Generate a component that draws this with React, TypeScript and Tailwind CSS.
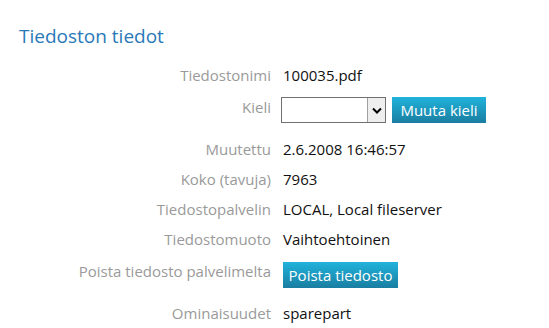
import React from "react";

const Label = ({ children }: { children: React.ReactNode }) => (
  <div className="w-[271px] shrink-0 text-right leading-5 text-[#9a9a9a]">{children}</div>
);

const Btn = ({ children, w }: { children: React.ReactNode; w: string }) => (
  <div
    className={`${w} h-[26px] flex items-center justify-center text-white leading-5 bg-gradient-to-b from-[#20b3dc] to-[#1a7ea1]`}
  >
    {children}
  </div>
);

export default function App() {
  return (
    <div
      className="w-[549px] h-[328px] bg-white overflow-hidden text-[15px] text-[#111]"
      style={{ fontFamily: '"Open Sans", "Noto Sans", sans-serif' }}
    >
      <div className="pl-[19px] pt-[22px] h-[65px] text-[19px] leading-7 text-[#2a79b8]">Tiedoston tiedot</div>
      <div className="flex flex-col">
        <div className="flex items-start gap-3 h-[32px]">
          <Label>Tiedostonimi</Label>
          <div className="leading-5">100035.pdf</div>
        </div>
        <div className="flex items-start gap-[10px] h-[42px]">
          <Label>Kieli</Label>
          <div className="flex items-start gap-[6px]">
            <div className="w-[105px] h-[26px] border border-[#707070] bg-white flex justify-end">
              <div className="w-[18px] h-full bg-[#eeeeee] border-l border-[#a0a0a0] flex items-center justify-center">
                <svg width="10" height="7" viewBox="0 0 10 7">
                  <path d="M1 1.5 L5 5.5 L9 1.5" fill="none" stroke="#000" strokeWidth="2" />
                </svg>
              </div>
            </div>
            <Btn w="w-[94px]">Muuta kieli</Btn>
          </div>
        </div>
        <div className="flex items-start gap-3 h-[30px]">
          <Label>Muutettu</Label>
          <div className="leading-5">2.6.2008 16:46:57</div>
        </div>
        <div className="flex items-start gap-3 h-[30px]">
          <Label>Koko (tavuja)</Label>
          <div className="leading-5">7963</div>
        </div>
        <div className="flex items-start gap-3 h-[30px]">
          <Label>Tiedostopalvelin</Label>
          <div className="leading-5">LOCAL, Local fileserver</div>
        </div>
        <div className="flex items-start gap-3 h-[32px]">
          <Label>Tiedostomuoto</Label>
          <div className="leading-5">Vaihtoehtoinen</div>
        </div>
        <div className="flex items-start gap-3 h-[42px]">
          <Label>Poista tiedosto palvelimelta</Label>
          <div className="mt-px">
            <Btn w="w-[115px]">Poista tiedosto</Btn>
          </div>
        </div>
        <div className="flex items-start gap-3 h-[30px]">
          <Label>Ominaisuudet</Label>
          <div className="leading-5">sparepart</div>
        </div>
      </div>
    </div>
  );
}
